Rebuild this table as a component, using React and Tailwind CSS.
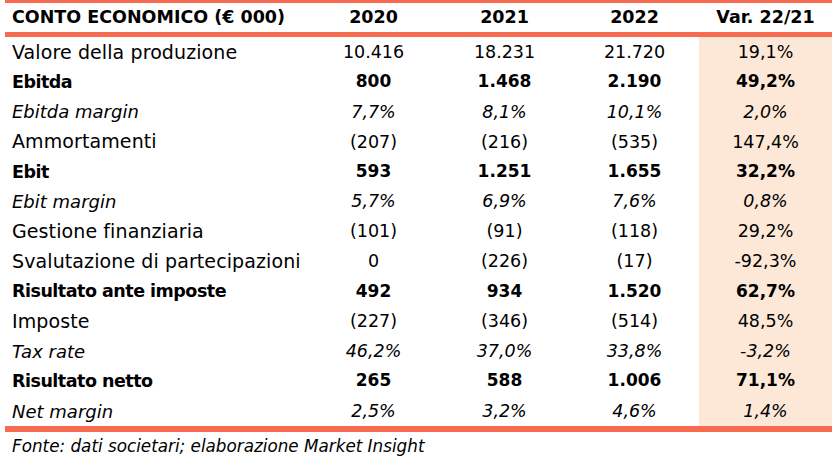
import React from "react";

const rows = [
  { l: "Valore della produzione", v: ["10.416", "18.231", "21.720", "19,1%"], s: "n" },
  { l: "Ebitda", v: ["800", "1.468", "2.190", "49,2%"], s: "b" },
  { l: "Ebitda margin", v: ["7,7%", "8,1%", "10,1%", "2,0%"], s: "i" },
  { l: "Ammortamenti", v: ["(207)", "(216)", "(535)", "147,4%"], s: "n" },
  { l: "Ebit", v: ["593", "1.251", "1.655", "32,2%"], s: "b" },
  { l: "Ebit margin", v: ["5,7%", "6,9%", "7,6%", "0,8%"], s: "i" },
  { l: "Gestione finanziaria", v: ["(101)", "(91)", "(118)", "29,2%"], s: "n" },
  { l: "Svalutazione di partecipazioni", v: ["0", "(226)", "(17)", "-92,3%"], s: "n" },
  { l: "Risultato ante imposte", v: ["492", "934", "1.520", "62,7%"], s: "b" },
  { l: "Imposte", v: ["(227)", "(346)", "(514)", "48,5%"], s: "n" },
  { l: "Tax rate", v: ["46,2%", "37,0%", "33,8%", "-3,2%"], s: "i" },
  { l: "Risultato netto", v: ["265", "588", "1.006", "71,1%"], s: "b" },
  { l: "Net margin", v: ["2,5%", "3,2%", "4,6%", "1,4%"], s: "i" },
];

const labelCls = {
  n: "font-normal not-italic text-[19px] tracking-[0.1px]",
  b: "font-bold not-italic text-[17.5px] tracking-[-0.5px]",
  i: "font-normal italic text-[18px]",
};
const numCls = {
  n: "font-normal not-italic text-[17.5px]",
  b: "font-bold not-italic text-[17px]",
  i: "font-normal italic text-[17.5px]",
};

export default function App() {
  return (
    <div
      className="w-[832px] h-[461px] bg-white text-black overflow-hidden"
      style={{ fontFamily: '"DejaVu Sans", "Liberation Sans", sans-serif' }}
    >
      <div className="pl-[5px]">
        <div className="h-[3px] bg-[#f76b50]" />
        <div className="grid grid-cols-[303px_131px_131px_129px_1fr] h-[29px] items-center text-[17.5px] font-bold">
          <div className="pl-[7px] whitespace-nowrap">CONTO ECONOMICO (€ 000)</div>
          <div className="text-center">2020</div>
          <div className="text-center">2021</div>
          <div className="text-center">2022</div>
          <div className="text-center">Var. 22/21</div>
        </div>
        <div className="h-[5px] bg-[#f76b50]" />
        <div className="flex flex-col h-[389px]">
          {rows.map((r) => (
            <div
              key={r.l}
              className={`grid grid-cols-[303px_131px_131px_129px_1fr] flex-1 items-center ${numCls[r.s]}`}
            >
              <div className={`pl-[7px] whitespace-nowrap ${labelCls[r.s]}`}>{r.l}</div>
              <div className="text-center">{r.v[0]}</div>
              <div className="text-center">{r.v[1]}</div>
              <div className="text-center">{r.v[2]}</div>
              <div className="text-center bg-[#fde8d8] h-full flex items-center justify-center">{r.v[3]}</div>
            </div>
          ))}
        </div>
        <div className="h-[6px] bg-[#f76b50]" />
        <div className="h-[29px] flex items-center pl-[7px] text-[16.8px] italic whitespace-nowrap">
          Fonte: dati societari; elaborazione Market Insight
        </div>
      </div>
    </div>
  );
}
